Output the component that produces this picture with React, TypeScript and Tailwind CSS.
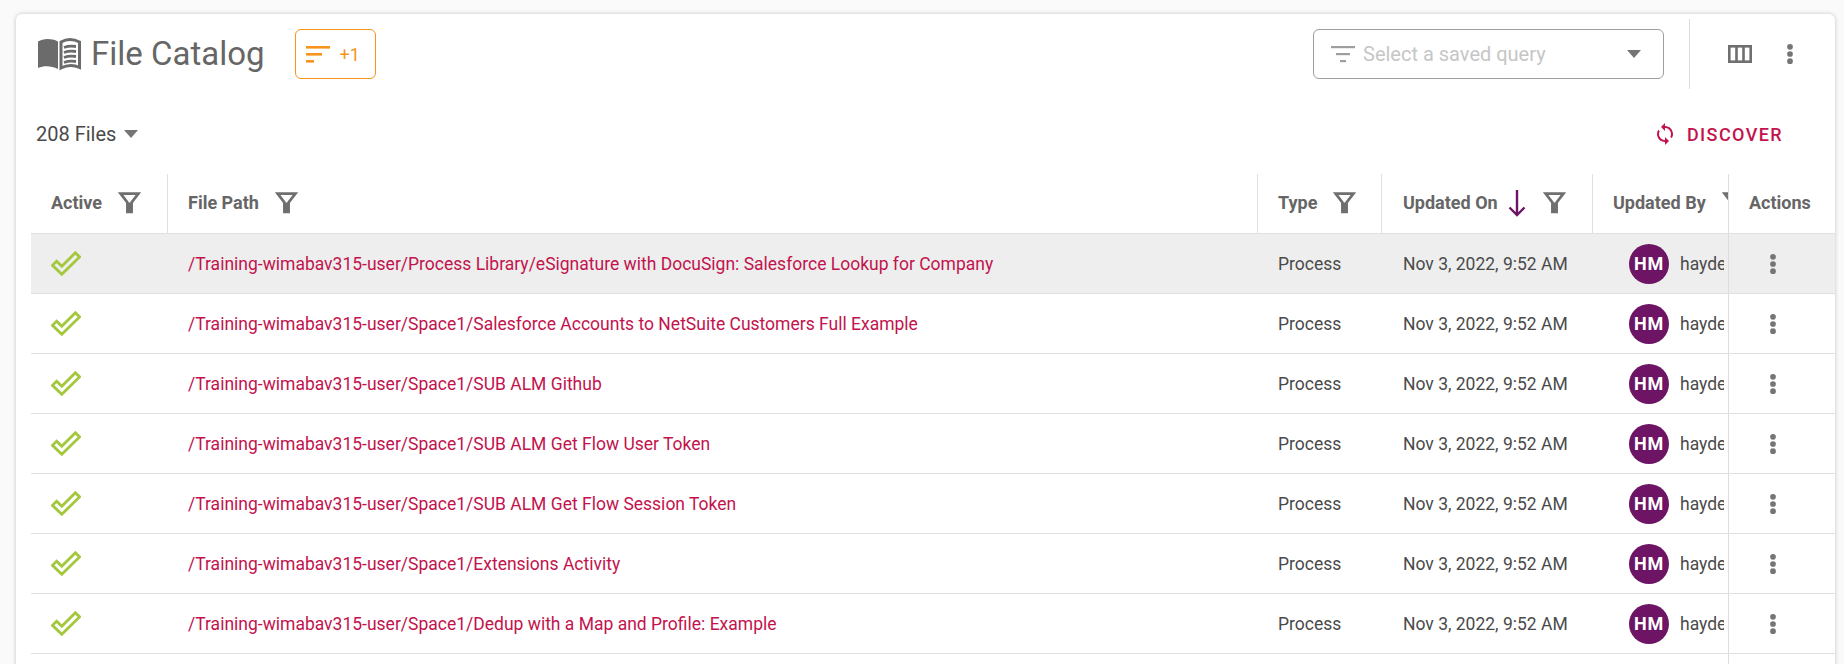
import { ReactNode } from "react";

const rows = [
  "/Training-wimabav315-user/Process Library/eSignature with DocuSign: Salesforce Lookup for Company",
  "/Training-wimabav315-user/Space1/Salesforce Accounts to NetSuite Customers Full Example",
  "/Training-wimabav315-user/Space1/SUB ALM Github",
  "/Training-wimabav315-user/Space1/SUB ALM Get Flow User Token",
  "/Training-wimabav315-user/Space1/SUB ALM Get Flow Session Token",
  "/Training-wimabav315-user/Space1/Extensions Activity",
  "/Training-wimabav315-user/Space1/Dedup with a Map and Profile: Example",
  "",
];

function BookIcon() {
  return (
    <svg width="44" height="34" viewBox="0 0 44 34" className="shrink-0">
      <path d="M1 4.5C6 1.5 14 1 21 4.5V32C14 28.5 7 28.5 1 31Z" fill="#6b6b6b" />
      <path
        d="M24 5C30 1.5 37 2 42.5 5V30.5C37 28 30 28 24 31Z"
        fill="none"
        stroke="#6b6b6b"
        strokeWidth="3"
      />
      <path
        d="M27 10.5C31 9 35 9 39 9.5M27 15.5C31 14 35 14 39 14.5M27 20.5C31 19 35 19 39 19.5M27 25.5C31 24 35 24 39 24.5"
        fill="none"
        stroke="#6b6b6b"
        strokeWidth="2.8"
      />
    </svg>
  );
}

function FunnelIcon({ className }: { className: string }) {
  return (
    <svg width="23" height="23" viewBox="0 0 22 22" className={`shrink-0 ${className}`}>
      <path d="M2.5 2.5H19.5L13 11V20H9V11Z" fill="none" stroke="#6f6f6f" strokeWidth="2.6" />
      <path d="M9 11H13V20.5H9Z" fill="#6f6f6f" />
    </svg>
  );
}

function Kebab({ size = 20 }: { size?: number }) {
  return (
    <svg width={size} height={size} viewBox="0 0 20 20" fill="#757575">
      <circle cx="10" cy="3.5" r="2.6" />
      <circle cx="10" cy="10" r="2.6" />
      <circle cx="10" cy="16.5" r="2.6" />
    </svg>
  );
}

function CheckIcon() {
  return (
    <svg width="30" height="25" viewBox="0 0 32 26">
      <path
        d="M1.5 15L6 10.5L11.5 16L26 1.5L30.5 6L11.5 24.5Z"
        fill="none"
        stroke="#a4c83c"
        strokeWidth="3"
      />
    </svg>
  );
}

function HeadCell({
  className,
  label,
  children,
}: {
  className: string;
  label: string;
  children?: ReactNode;
}) {
  return (
    <div
      className={`flex items-center h-full shrink-0 pl-5 pb-[2px] overflow-hidden whitespace-nowrap font-bold text-[18px] text-[#666666] ${className}`}
    >
      <span>{label}</span>
      {children}
    </div>
  );
}

function Row({ path, selected }: { path: string; selected: boolean }) {
  return (
    <div
      className={`flex h-[60px] border-b border-[#e0e0e0] text-[17.5px] text-[#4a4a4a] whitespace-nowrap ${
        selected ? "bg-[#eeeeee]" : ""
      }`}
    >
      <div className="w-[137px] shrink-0 flex items-center pl-5">
        {path && <CheckIcon />}
      </div>
      <div className="w-[1090px] shrink-0 flex items-center pl-5 pt-[2px] text-[#c2134d]">{path}</div>
      <div className="w-[124px] shrink-0 flex items-center pl-5 pt-[2px]">Process</div>
      <div className="w-[211px] shrink-0 flex items-center pl-[21px] pt-[2px]">Nov 3, 2022, 9:52 AM</div>
      <div className="w-[135px] shrink-0 flex items-center pl-9 overflow-hidden">
        <span className="w-10 h-10 shrink-0 rounded-full bg-[#6e1464] text-white font-bold text-[18px] tracking-[0.8px] flex items-center justify-center">
          HM
        </span>
        <span className="ml-[11px] mr-1 pt-[2px] min-w-0 overflow-hidden">hayden.mills</span>
      </div>
      <div className="flex-1 flex items-center justify-center pr-[18px] border-l border-[#dddddd]">
        <Kebab size={22} />
      </div>
    </div>
  );
}

export default function App() {
  return (
    <div className="h-[664px] overflow-hidden bg-[#fafafa] pt-[14px] pl-4 pr-[9px] font-['Roboto',sans-serif]">
      <div className="bg-white rounded-t-md shadow-[0_0_4px_rgba(0,0,0,0.22)] h-[700px]">
        <div className="flex items-center h-[80px] pl-[21px] pr-[34px]">
          <BookIcon />
          <h1 className="ml-[10px] text-[33px] text-[#666666]">File Catalog</h1>
          <button className="ml-[30px] flex items-center w-[81px] h-[50px] border border-[#f7941d] rounded-md pl-[10px] text-[18px] text-[#f7941d]">
            <svg width="24" height="18" viewBox="0 0 24 18" fill="#f7941d">
              <rect x="0" y="1" width="24" height="2.6" />
              <rect x="0" y="8" width="16" height="2.6" />
              <rect x="0" y="15" width="8" height="2.6" />
            </svg>
            <span className="ml-[10px]">+1</span>
          </button>
          <div className="ml-auto flex items-center w-[351px] h-[50px] border border-[#9e9e9e] rounded-md pl-[17px] pr-[22px] text-[20px] text-[#c6c6c6]">
            <svg width="24" height="18" viewBox="0 0 24 18" fill="#9e9e9e">
              <rect x="0" y="1" width="24" height="2.2" />
              <rect x="5" y="8" width="14" height="2.2" />
              <rect x="9" y="15" width="6" height="2.2" />
            </svg>
            <span className="ml-[8px]">Select a saved query</span>
            <svg width="14" height="8" viewBox="0 0 14 8" fill="#757575" className="ml-auto">
              <path d="M0 0H14L7 8Z" />
            </svg>
          </div>
          <div className="ml-[25px] w-px h-[70px] bg-[#dddddd]" />
          <svg
            width="24"
            height="20"
            viewBox="0 0 24 20"
            className="ml-[38px]"
            fill="none"
            stroke="#6f6f6f"
            strokeWidth="2.6"
          >
            <rect x="1.3" y="2.3" width="21.4" height="15.4" />
            <path d="M8.5 2.3V17.7M15.5 2.3V17.7" />
          </svg>
          <div className="ml-[27px]">
            <Kebab size={22} />
          </div>
        </div>

        <div className="flex items-center h-[80px] pl-[20px] pr-[52px]">
          <span className="text-[20px] text-[#4a4a4a]">208 Files</span>
          <svg width="14" height="8" viewBox="0 0 14 8" fill="#757575" className="ml-[8px]">
            <path d="M0 0H14L7 8Z" />
          </svg>
          <svg width="24" height="24" viewBox="0 0 24 24" fill="#c2134d" className="ml-auto">
            <path d="M12 4V1L8 5l4 4V6c3.31 0 6 2.69 6 6 0 1.01-.25 1.97-.7 2.8l1.46 1.46C19.54 15.03 20 13.57 20 12c0-4.42-3.58-8-8-8zm0 14c-3.31 0-6-2.69-6-6 0-1.01.25-1.97.7-2.8L5.24 7.74C4.46 8.97 4 10.43 4 12c0 4.42 3.58 8 8 8v3l4-4-4-4v3z" />
          </svg>
          <span className="ml-[10px] text-[18px] font-medium tracking-[1.4px] text-[#c2134d]">DISCOVER</span>
        </div>

        <div className="ml-[15px]">
          <div className="flex h-[60px] border-b border-[#e0e0e0]">
            <HeadCell className="w-[137px] border-r border-[#e0e0e0]" label="Active">
              <FunnelIcon className="ml-[16px]" />
            </HeadCell>
            <HeadCell className="w-[1090px] border-r border-[#e0e0e0]" label="File Path">
              <FunnelIcon className="ml-[16px]" />
            </HeadCell>
            <HeadCell className="w-[124px] border-r border-[#e0e0e0]" label="Type">
              <FunnelIcon className="ml-[16px]" />
            </HeadCell>
            <HeadCell className="w-[211px] border-r border-[#e0e0e0] pl-[21px]" label="Updated On">
              <svg width="20" height="28" viewBox="0 0 20 28" className="ml-[9px] shrink-0" fill="none" stroke="#6e1464" strokeWidth="2.4">
                <path d="M10 1V26M2.5 18.5L10 26L17.5 18.5" />
              </svg>
              <FunnelIcon className="ml-[16px]" />
            </HeadCell>
            <HeadCell className="w-[135px]" label="Updated By">
              <FunnelIcon className="ml-[16px]" />
            </HeadCell>
            <HeadCell className="flex-1 border-l border-[#dddddd]" label="Actions" />
          </div>
          {rows.map((path, i) => (
            <Row key={i} path={path} selected={i === 0} />
          ))}
        </div>
      </div>
    </div>
  );
}
